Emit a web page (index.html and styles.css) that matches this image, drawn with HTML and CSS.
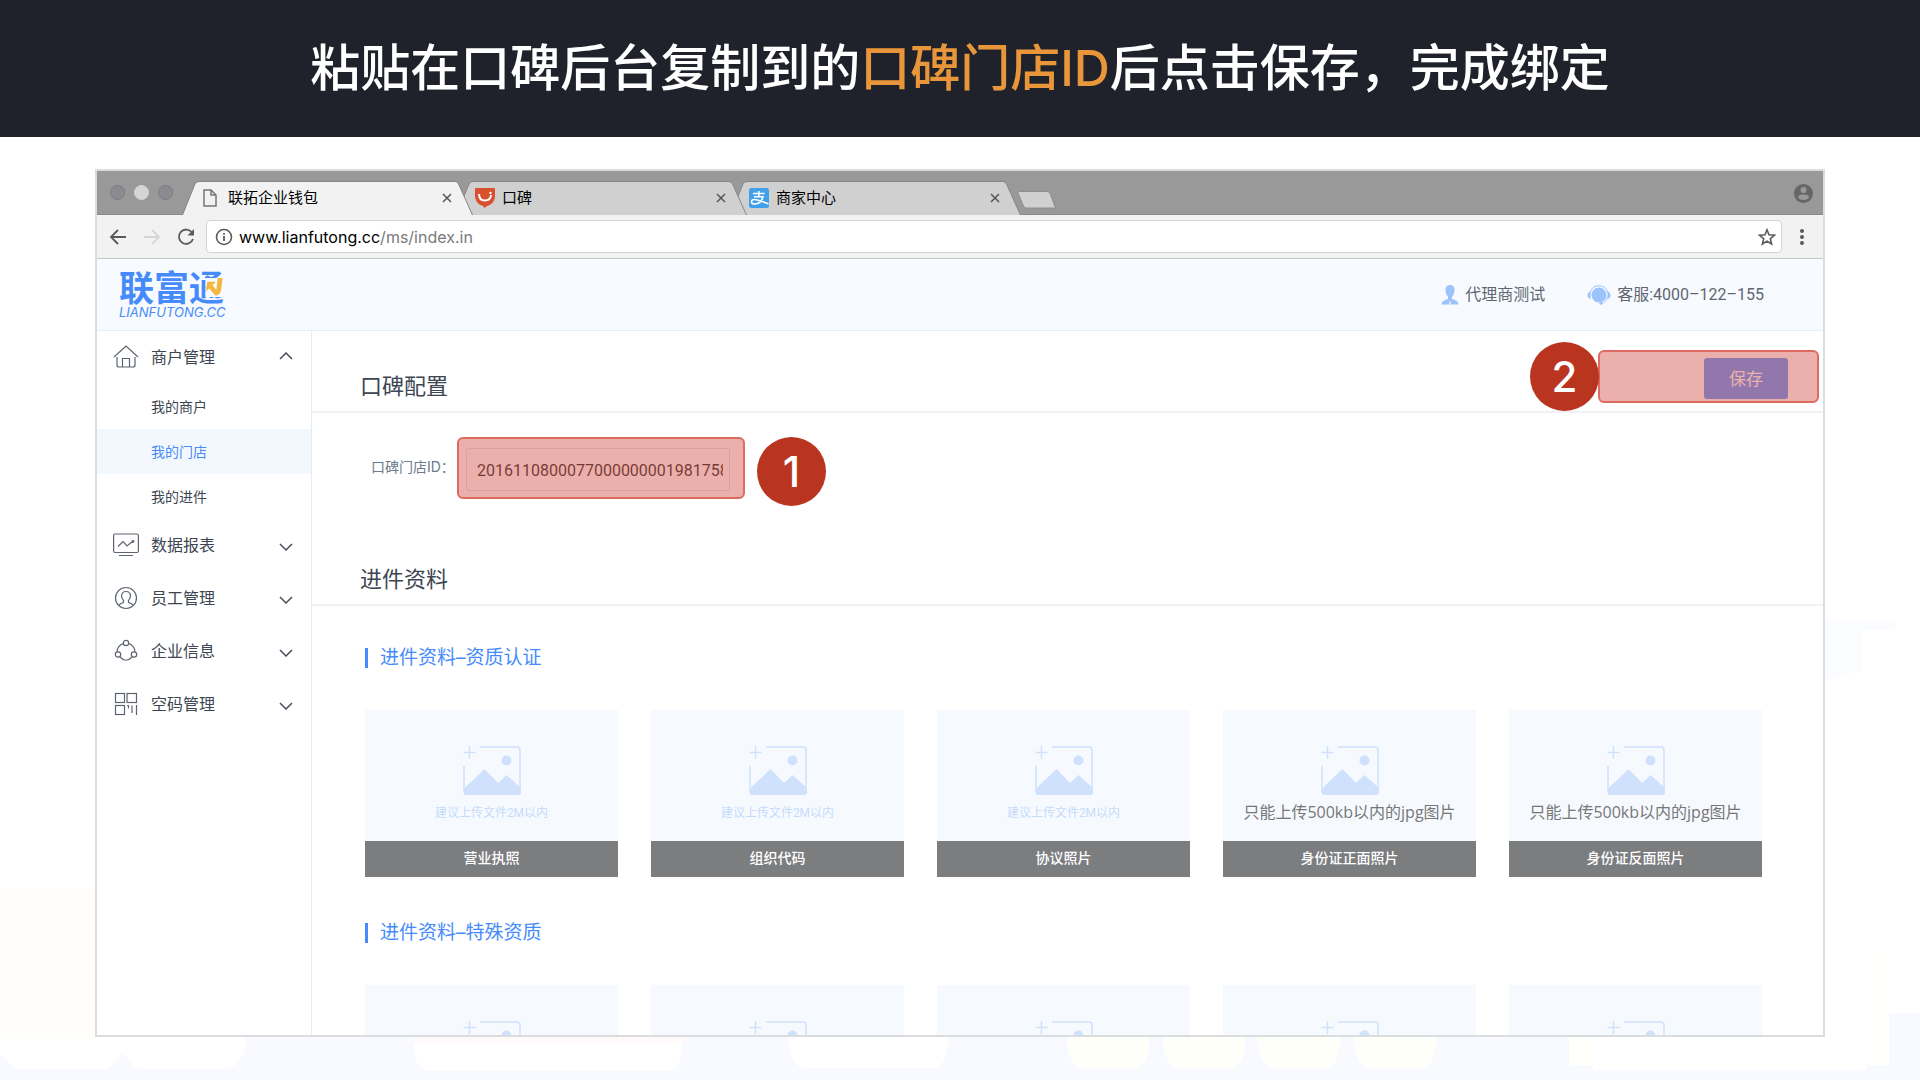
FILE: index.html
```html
<!DOCTYPE html>
<html lang="zh-CN">
<head>
<meta charset="utf-8">
<meta name="viewport" content="width=device-width, initial-scale=1">
<title>联拓企业钱包</title>
<link rel="stylesheet" href="styles.css">
</head>
<body>
<svg class="sprite" aria-hidden="true">
  <symbol id="tab-shape" viewBox="0 0 291 34" preserveAspectRatio="none"><path d="M0.5 34 L13 3 Q14.5 0.5 17 0.5 H273 Q275.500 0.5 276.500 3 L290.500 34"/></symbol>
  <symbol id="close" viewBox="0 0 10 10"><path d="M1 1 L9 9 M9 1 L1 9"/></symbol>
  <symbol id="chevron" viewBox="0 0 14 8"><path d="M1 1 L7 7 L13 1"/></symbol>
  <symbol id="picture" viewBox="0 0 58 50">
    <path d="M6.500 0 V13 M0.5 6.500 H12.500 M17 1 H54 Q57 1 57 4 V46 M1 20 V46" fill="none" stroke="#cfe1fc" stroke-width="1.500"/>
    <circle cx="43.500" cy="14.500" r="5" fill="#cfe1fc"/>
    <path d="M0.500 43 L21.500 23 L35 37 L43.500 29 L58 42 V46 Q58 49 55 49 H3 Q0.500 49 0.500 46 Z" fill="#cfe1fc"/>
  </symbol>
</svg>

<header class="banner"><h1 class="banner-title">粘贴在口碑后台复制到的<em>口碑门店ID</em>后点击保存，完成绑定</h1></header>

<div class="stage">
  <svg class="scenery" viewBox="0 0 1920 460" preserveAspectRatio="none" aria-hidden="true">
    <rect x="0" y="268" width="96" height="152" fill="#fffefa"/>
    <rect x="0" y="417" width="1920" height="43" fill="#f8faff"/>
    <path d="M0 417 H246 Q246 440 229 449 H139 Q131 446 123 432 Q113 446 107 449 H18 Q10 446 0 434 Z" fill="#fff"/>
    <path d="M413 417 H682 Q682 450 670 451 H428 Q413 450 413 417 Z" fill="#fff"/>
    <rect x="413" y="417" width="270" height="6" fill="#fff9fa"/>
    <path d="M788 417 H948 Q948 448 932 448 H806 Q790 448 788 417 Z" fill="#fff"/>
    <path d="M1067 417 H1149 Q1149 448 1134 448 H1083 Q1067 446 1067 417 Z M1163 417 H1245 Q1245 448 1230 448 H1179 Q1163 446 1163 417 Z M1258 417 H1340 Q1340 448 1325 448 H1274 Q1258 446 1258 417 Z M1354 417 H1436 Q1436 448 1421 448 H1370 Q1354 446 1354 417 Z" fill="#fffffa"/>
    <rect x="1889" y="393" width="31" height="30" fill="#f9faff"/>
    <path d="M1569 417 H1867 V335 H1889 V445 H1569 Z" fill="#fffffc"/>
    <rect x="1593" y="417" width="274" height="33" fill="#fff"/>
    <path d="M1824 0 H1895 V10 H1862 V50 L1824 60 Z" fill="#fafcff"/>
  </svg>

  <section class="window">
    <div class="titlebar">
      <div class="lights"><i></i><i class="light-mid"></i><i></i></div>
      <div class="tabs">
        <div class="tab tab-active">
          <svg class="tab-bg" aria-hidden="true"><use href="#tab-shape"/></svg>
          <svg class="tab-icon" viewBox="0 0 20 20" aria-hidden="true"><path d="M3 2 H10 L15 7 V18 H3 Z M10 2 V7 H15" fill="none" stroke="#777" stroke-width="1.500"/></svg>
          <span class="tab-title">联拓企业钱包</span>
          <button class="tab-close" aria-label="关闭"><svg><use href="#close"/></svg></button>
        </div>
        <div class="tab tab-second">
          <svg class="tab-bg" aria-hidden="true"><use href="#tab-shape"/></svg>
          <svg class="tab-icon" viewBox="0 0 20 20" aria-hidden="true"><path d="M1 0 H19 Q20 0 20 1 V9 Q19 16 12 18 L9.500 20 L8 18 Q1 16 0 9 V1 Q0 0 1 0 Z" fill="#d8502c"/><path d="M4 6 Q4 12.500 10 12.500 Q15.500 12.500 16 7" fill="none" stroke="#fff" stroke-width="2"/><circle cx="15.500" cy="5" r="1.200" fill="#fff"/></svg>
          <span class="tab-title">口碑</span>
          <button class="tab-close" aria-label="关闭"><svg><use href="#close"/></svg></button>
        </div>
        <div class="tab">
          <svg class="tab-bg" aria-hidden="true"><use href="#tab-shape"/></svg>
          <svg class="tab-icon" viewBox="0 0 20 20" aria-hidden="true"><rect width="20" height="20" rx="2.500" fill="#429fe9"/><path d="M4 5.500 H15.500 M9.800 3 V8.500 M5 8.700 H14 Q12.500 16 5.500 16 Q2.500 16 2.500 13.700 Q2.500 11.500 5.500 11.500 Q9 11.500 19.500 16" fill="none" stroke="#fff" stroke-width="1.600"/></svg>
          <span class="tab-title">商家中心</span>
          <button class="tab-close" aria-label="关闭"><svg><use href="#close"/></svg></button>
        </div>
      </div>
      <svg class="new-tab" viewBox="0 0 40 18" aria-hidden="true"><path d="M2.500 0.500 H30 Q32 0.500 33 2.500 L38.500 17 H9.500 Q7.500 17 6.500 15 L1 2 Q0.500 0.500 2.500 0.500 Z" fill="#d0d0d0" stroke="#8e8e8e"/></svg>
      <svg class="profile" viewBox="0 0 19 19" aria-hidden="true"><circle cx="9.500" cy="9.500" r="9.500" fill="#666"/><circle cx="9.500" cy="6" r="3" fill="#999"/><path d="M4 13.500 Q4 10.500 9.500 10.500 Q15 10.500 15 13.500 Q13 16 9.500 16 Q6 16 4 13.500 Z" fill="#999"/></svg>
    </div>

    <div class="toolbar">
      <button class="nav" aria-label="后退"><svg viewBox="0 0 18 18"><path d="M17 9 H2.500 M9 2 L2 9 L9 16" fill="none" stroke="#5a5a5a" stroke-width="1.800"/></svg></button>
      <button class="nav" aria-label="前进"><svg viewBox="0 0 18 18"><path d="M1 9 H15.500 M9 2 L16 9 L9 16" fill="none" stroke="#d6d6d6" stroke-width="1.800"/></svg></button>
      <button class="nav" aria-label="刷新"><svg viewBox="0 0 18 18"><path d="M15 4.500 A7.200 7.200 0 1 0 16 11" fill="none" stroke="#5a5a5a" stroke-width="1.800"/><path d="M17 1 V7.500 H10.500 Z" fill="#5a5a5a"/></svg></button>
      <div class="address">
        <svg class="info" viewBox="0 0 18 18" aria-hidden="true"><circle cx="9" cy="9" r="7.500" fill="none" stroke="#5a5a5a" stroke-width="1.600"/><path d="M9 8 V13 M9 5 V6.800" stroke="#5a5a5a" stroke-width="1.800"/></svg>
        <span class="url"><b>www.lianfutong.cc</b>/ms/index.in</span>
        <svg class="star" viewBox="0 0 18 18" aria-hidden="true"><path d="M9 1.800 L11 6.800 L16.400 7.200 L12.300 10.700 L13.600 16 L9 13.100 L4.400 16 L5.700 10.700 L1.600 7.200 L7 6.800 Z" fill="none" stroke="#5a5a5a" stroke-width="1.600"/></svg>
      </div>
      <button class="menu" aria-label="菜单"><svg viewBox="0 0 4 16"><circle cx="2" cy="2" r="2"/><circle cx="2" cy="8" r="2"/><circle cx="2" cy="14" r="2"/></svg></button>
    </div>

    <header class="site-header">
      <div class="logo">
        <span class="logo-name">联富通</span>
        <span class="logo-domain">LIANFUTONG.CC</span>
        <svg class="logo-arrow" viewBox="0 0 22 20" aria-hidden="true"><path d="M3 0 H22 V20 H3 Z" fill="#f7faff"/><path d="M16 0 H21 L19.500 13 Q18 18.500 13.500 18.500 L7 11 L3.500 14 L5 4 H14 L10.500 7.500 L14.500 12.500 Z" fill="#f3b73e"/></svg>
      </div>
      <div class="account">
        <span class="account-item"><svg width="18" height="20" viewBox="0 0 18 20" aria-hidden="true"><path d="M9 0 Q13.500 0 13.500 5 Q13.500 9.500 11 11.500 V14 Q17.500 15.500 17.500 19.500 H0.500 Q0.500 15.500 7 14 V11.500 Q4.500 9.500 4.500 5 Q4.500 0 9 0 Z" fill="#9cc3fb"/><path d="M9 15.500 L8 19.500 H10 Z" fill="#f7faff"/></svg>代理商测试</span>
        <span class="account-item"><svg width="24" height="20" viewBox="0 0 24 20" aria-hidden="true"><circle cx="12" cy="10" r="7.500" fill="#9cc3fb"/><path d="M3 8 Q5 0.700 12 0.700 Q19 0.700 21 8 M21 11 Q19 18 14 18.500" fill="none" stroke="#9cc3fb"/><path d="M3.500 6.500 V14 Q0.500 13 0.500 10.200 Q0.500 7.500 3.500 6.500 Z M20.500 6.500 V14 Q23.500 13 23.500 10.200 Q23.500 7.500 20.500 6.500 Z" fill="#9cc3fb"/><circle cx="14" cy="18.300" r="1.500" fill="#9cc3fb"/></svg>客服:4000–122–155</span>
      </div>
    </header>

    <div class="body">
      <nav class="sidebar">
        <a class="item" href="#"><svg class="item-icon" viewBox="0 0 26 26"><path d="M1 13 L13 2 L25 13 M4 13 V21 Q4 23 6 23 H20 Q22 23 22 21 V13 M9.500 23 V14.500 H16.500 V23"/></svg>商户管理<svg class="chevron chevron-up"><use href="#chevron"/></svg></a>
        <a class="sub" href="#">我的商户</a>
        <a class="sub sub-active" href="#">我的门店</a>
        <a class="sub" href="#">我的进件</a>
        <a class="item" href="#"><svg class="item-icon" viewBox="0 0 26 26"><rect x="0.600" y="2" width="24.800" height="18.500" rx="1.500"/><path d="M6 23.500 H20 M5 14.500 L10 9.500 L14 14 L19.500 9.500"/><circle cx="20" cy="9.500" r="0.800"/></svg>数据报表<svg class="chevron"><use href="#chevron"/></svg></a>
        <a class="item" href="#"><svg class="item-icon" viewBox="0 0 26 26"><circle cx="13" cy="13" r="10.500"/><path d="M5.500 20.500 Q7 18.500 10.500 17.500 V15.500 Q8.500 13.500 8.500 10.500 Q9 6.500 13 6.500 Q17 6.500 17.500 10.500 Q17.500 13.500 15.500 15.500 V17.500 Q19 18.500 20.500 20.500"/></svg>员工管理<svg class="chevron"><use href="#chevron"/></svg></a>
        <a class="item" href="#"><svg class="item-icon" viewBox="0 0 26 26"><circle cx="13" cy="5" r="2.700"/><circle cx="5" cy="16.500" r="2.700"/><circle cx="21" cy="16.500" r="2.700"/><path d="M10.300 5.500 Q4.500 7.500 4 13.800 M15.700 5.500 Q21.500 7.500 22 13.800 M7 19 Q13 25.500 19 19"/></svg>企业信息<svg class="chevron"><use href="#chevron"/></svg></a>
        <a class="item" href="#"><svg class="item-icon" viewBox="0 0 26 26"><rect x="2.500" y="2.500" width="9" height="9"/><rect x="14" y="2.500" width="9.500" height="9"/><rect x="2.500" y="14.500" width="9" height="9"/><path d="M14 14.500 H15.500 V17.500 M19 14.500 V22 M23.500 14 V24"/></svg>空码管理<svg class="chevron"><use href="#chevron"/></svg></a>
      </nav>

      <main class="main">
        <div class="section-head">
          <h2>口碑配置</h2>
          <button class="save">保存</button>
          <div class="mark mark-save"></div>
          <span class="step step-save">2</span>
        </div>
        <div class="form-row">
          <label for="shop-id">口碑门店ID：</label>
          <div class="field">
            <input id="shop-id" type="text" value="2016110800077000000001981758">
            <div class="mark mark-field"></div>
            <span class="step step-field">1</span>
          </div>
        </div>
        <div class="section-head"><h2>进件资料</h2></div>
        <div class="materials">
          <h3>进件资料–资质认证</h3>
          <div class="cards">
            <figure class="card"><svg class="picture"><use href="#picture"/></svg><p class="hint">建议上传文件2M以内</p><figcaption>营业执照</figcaption></figure>
            <figure class="card"><svg class="picture"><use href="#picture"/></svg><p class="hint">建议上传文件2M以内</p><figcaption>组织代码</figcaption></figure>
            <figure class="card"><svg class="picture"><use href="#picture"/></svg><p class="hint">建议上传文件2M以内</p><figcaption>协议照片</figcaption></figure>
            <figure class="card"><svg class="picture"><use href="#picture"/></svg><p class="hint hint-strong">只能上传500kb以内的jpg图片</p><figcaption>身份证正面照片</figcaption></figure>
            <figure class="card"><svg class="picture"><use href="#picture"/></svg><p class="hint hint-strong">只能上传500kb以内的jpg图片</p><figcaption>身份证反面照片</figcaption></figure>
          </div>
          <h3>进件资料–特殊资质</h3>
          <div class="cards">
            <div class="card"><svg class="picture"><use href="#picture"/></svg></div>
            <div class="card"><svg class="picture"><use href="#picture"/></svg></div>
            <div class="card"><svg class="picture"><use href="#picture"/></svg></div>
            <div class="card"><svg class="picture"><use href="#picture"/></svg></div>
            <div class="card"><svg class="picture"><use href="#picture"/></svg></div>
          </div>
        </div>
      </main>
    </div>
  </section>
</div>
</body>
</html>
```
FILE: styles.css
```css
* { box-sizing: border-box; }

body {
  margin: 0;
  height: 100vh;
  display: flex;
  flex-direction: column;
  background: #fff;
  color: #3d4652;
  font-family: Inter, "Noto Sans CJK SC", sans-serif;
}

h1, h2, h3, p, figure { margin: 0; font-weight: 400; }
button { padding: 0; border: 0; background: none; font: inherit; }
svg { display: block; flex: none; }
a { color: inherit; text-decoration: none; }
.sprite { position: absolute; width: 0; height: 0; }

.banner {
  height: 137px;
  display: flex;
  justify-content: center;
  padding-top: 32px;
  background: #20222b;
}
.banner-title {
  color: #fff;
  font-size: 50px;
  line-height: 72px;
  font-weight: 500;
  white-space: nowrap;
}
.banner-title em { color: #e89639; font-style: normal; }

.stage {
  position: relative;
  flex: 1;
  min-height: 0;
  display: flex;
  padding: 32px 95px 43px;
}
.scenery { position: absolute; left: 0; bottom: 0; width: 100%; height: 460px; }

.window {
  position: relative;
  flex: 1;
  min-width: 0;
  display: flex;
  flex-direction: column;
  overflow: hidden;
  background: #fff;
  border: 2px solid #dbdcde;
}

/* browser chrome */
.titlebar {
  height: 44px;
  flex: none;
  display: flex;
  align-items: flex-end;
  padding: 0 10px 0 13px;
  background: #999;
  box-shadow: inset 0 -1px #8a8a8a;
}
.lights { display: flex; gap: 9px; width: 72px; padding-bottom: 15px; }
.lights i { width: 15px; height: 15px; border-radius: 50%; background: #8b8a91; border: 1px solid #7c7b83; }
.lights .light-mid { background: #d4d4d4; border-color: #d4d4d4; }
.tabs { display: flex; }
.tab {
  position: relative;
  width: 291px;
  height: 34px;
  margin-right: -17px;
  padding: 0 20px 1px 19px;
  display: flex;
  align-items: center;
}
.tab-bg { position: absolute; left: 0; top: 0; width: 100%; height: 100%; fill: #d0d0d0; stroke: #868686; }
.tab-second { z-index: 1; }
.tab-active { z-index: 2; }
.tab-active .tab-bg { fill: #f2f2f2; }
.tab-icon { position: relative; width: 20px; height: 20px; }
.tab-title {
  position: relative;
  flex: 1;
  padding-left: 7px;
  color: #000;
  font-size: 15px;
  line-height: 20px;
}
.tab-close { position: relative; width: 12px; height: 12px; display: grid; place-items: center; }
.tab-close svg { width: 10px; height: 10px; stroke: #555; stroke-width: 1.5px; }
.new-tab { width: 40px; height: 18px; margin: 0 auto 6px 13px; }
.profile { width: 19px; height: 19px; margin-bottom: 12px; }

.toolbar {
  height: 44px;
  flex: none;
  display: flex;
  align-items: center;
  gap: 16px;
  padding: 0 19px 0 12px;
  background: #f2f2f2;
  border-bottom: 1px solid #c9c9cb;
}
.nav svg { width: 18px; height: 18px; }
.menu svg { width: 4px; height: 16px; fill: #5a5a5a; }
.address {
  flex: 1;
  height: 33px;
  margin-right: 2px;
  margin-left: -5px;
  display: flex;
  align-items: center;
  gap: 6px;
  padding: 0 5px 0 8px;
  background: #fff;
  border: 1px solid #d2d2d2;
  border-radius: 4px;
}
.info, .star { width: 18px; height: 18px; }
.url { flex: 1; color: #7a7a7a; font-size: 16px; line-height: 24px; }
.url b { color: #000; font-weight: 400; }

/* site */
.site-header {
  height: 72px;
  flex: none;
  display: flex;
  align-items: center;
  justify-content: space-between;
  padding: 0 59px 0 22px;
  background: #f7faff;
  border-bottom: 1px solid #e6edf5;
}
.logo {
  position: relative;
  display: flex;
  flex-direction: column;
  gap: 3px;
  color: #468bfb;
}
.logo-name { font: 700 35px/32px "Noto Sans CJK SC", sans-serif; }
.logo-domain { font-size: 13px; line-height: 14px; font-style: italic; }
.logo-arrow { position: absolute; left: 83px; top: 8px; width: 22px; height: 19px; }
.account { display: flex; gap: 42px; }
.account-item {
  display: flex;
  align-items: center;
  gap: 6px;
  color: #5f6670;
  font: 16px/24px Roboto, "Noto Sans CJK SC", sans-serif;
}

.body { flex: 1; min-height: 0; display: flex; }
.sidebar { width: 215px; flex: none; border-right: 1px solid #e3edf6; }
.item {
  height: 53px;
  display: flex;
  align-items: center;
  padding: 0 18px 3px 16px;
  font-size: 16px;
}
.item-icon {
  width: 26px;
  height: 26px;
  margin: 2px 12px 0 0;
  fill: none;
  stroke: #5d6570;
  stroke-width: 1.2px;
}
.chevron { width: 14px; height: 8px; margin: 5px 0 0 auto; fill: none; stroke: #46505c; stroke-width: 1.5px; }
.chevron-up { margin-top: 0; transform: rotate(180deg); }
.sub {
  height: 45px;
  display: flex;
  align-items: center;
  padding: 0 0 2px 54px;
  font-size: 14px;
}
.sub-active { background: #f3f8ff; color: #468bfb; }

.main { flex: 1; min-width: 0; overflow: hidden; }
.section-head {
  position: relative;
  height: 82px;
  display: flex;
  align-items: flex-end;
  justify-content: space-between;
  padding: 0 35px 12px 48px;
  border-bottom: 2px solid #f0f1f3;
}
.section-head h2 { font-size: 22px; line-height: 26px; }
.save {
  width: 84px;
  height: 41px;
  padding-bottom: 2px;
  background: #4a8cff;
  border-radius: 3px;
  color: #fff;
  font-size: 17px;
}
.form-row { display: flex; padding: 35px 0 33px 59px; }
.form-row label {
  width: 95px;
  flex: none;
  color: #6b7b8c;
  font-size: 14px;
  line-height: 38px;
}
.field { position: relative; width: 264px; }
.field input {
  display: block;
  width: 100%;
  height: 43px;
  padding: 1px 6px 0 10px;
  border: 1px solid #d9dee5;
  border-radius: 3px;
  background: #fff;
  color: #111;
  font: 16px/20px Roboto, sans-serif;
}

/* tutorial highlights */
.mark {
  position: absolute;
  background: rgba(217, 97, 89, .5);
  border: 2px solid #df6a61;
  border-radius: 6px;
  pointer-events: none;
}
.mark-save { top: 19px; right: 4px; width: 221px; height: 53px; }
.mark-field { inset: -11px -15px -8px -9px; }
.step {
  position: absolute;
  width: 69px;
  height: 69px;
  border-radius: 50%;
  background: #b93520;
  color: #fff;
  font-size: 42px;
  font-weight: 500;
  line-height: 69px;
  text-align: center;
}
.step-save { top: 11px; right: 224px; }
.step-field { top: -11px; left: 291px; }

.materials { padding: 42px 61px 0 53px; }
.materials h3 {
  padding-left: 12px;
  border-left: 3px solid #468bfb;
  color: #468bfb;
  font-size: 19px;
  line-height: 20px;
}
.cards {
  display: grid;
  grid-template-columns: repeat(5, 1fr);
  gap: 33px;
  margin: 42px 0 46px;
}
.card {
  height: 167px;
  display: flex;
  flex-direction: column;
  align-items: center;
  padding-top: 36px;
  background: #f6faff;
}
.picture { width: 58px; height: 50px; }
.hint { margin-top: 5px; color: #c5dbfa; font: 12px/24px Roboto, "Noto Sans CJK SC", sans-serif; }
.hint-strong { color: #777; font: 16px/22px "Open Sans", "Noto Sans CJK SC", sans-serif; }
.card figcaption {
  width: 100%;
  margin-top: auto;
  padding-bottom: 2px;
  background: #7c7d7f;
  color: #fff;
  font-size: 14px;
  font-weight: 500;
  line-height: 34px;
  text-align: center;
}
```
